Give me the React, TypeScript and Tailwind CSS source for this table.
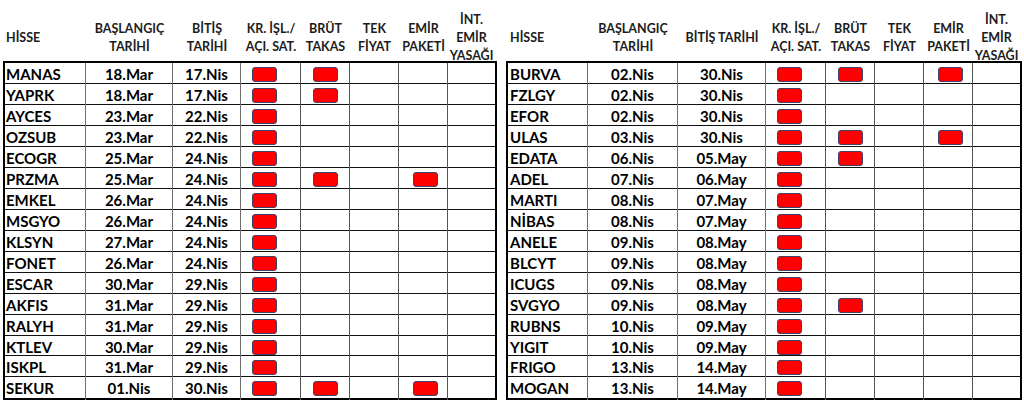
import React from 'react';

type Row = { code: string; start: string; end: string; flags: number[] };

const leftRows: Row[] = [
  { code: 'MANAS', start: '18.Mar', end: '17.Nis', flags: [0, 1] },
  { code: 'YAPRK', start: '18.Mar', end: '17.Nis', flags: [0, 1] },
  { code: 'AYCES', start: '23.Mar', end: '22.Nis', flags: [0] },
  { code: 'OZSUB', start: '23.Mar', end: '22.Nis', flags: [0] },
  { code: 'ECOGR', start: '25.Mar', end: '24.Nis', flags: [0] },
  { code: 'PRZMA', start: '25.Mar', end: '24.Nis', flags: [0, 1, 3] },
  { code: 'EMKEL', start: '26.Mar', end: '24.Nis', flags: [0] },
  { code: 'MSGYO', start: '26.Mar', end: '24.Nis', flags: [0] },
  { code: 'KLSYN', start: '27.Mar', end: '24.Nis', flags: [0] },
  { code: 'FONET', start: '26.Mar', end: '24.Nis', flags: [0] },
  { code: 'ESCAR', start: '30.Mar', end: '29.Nis', flags: [0] },
  { code: 'AKFIS', start: '31.Mar', end: '29.Nis', flags: [0] },
  { code: 'RALYH', start: '31.Mar', end: '29.Nis', flags: [0] },
  { code: 'KTLEV', start: '30.Mar', end: '29.Nis', flags: [0] },
  { code: 'ISKPL', start: '31.Mar', end: '29.Nis', flags: [0] },
  { code: 'SEKUR', start: '01.Nis', end: '30.Nis', flags: [0, 1, 3] },
];

const rightRows: Row[] = [
  { code: 'BURVA', start: '02.Nis', end: '30.Nis', flags: [0, 1, 3] },
  { code: 'FZLGY', start: '02.Nis', end: '30.Nis', flags: [0] },
  { code: 'EFOR', start: '02.Nis', end: '30.Nis', flags: [0] },
  { code: 'ULAS', start: '03.Nis', end: '30.Nis', flags: [0, 1, 3] },
  { code: 'EDATA', start: '06.Nis', end: '05.May', flags: [0, 1] },
  { code: 'ADEL', start: '07.Nis', end: '06.May', flags: [0] },
  { code: 'MARTI', start: '08.Nis', end: '07.May', flags: [0] },
  { code: 'NİBAS', start: '08.Nis', end: '07.May', flags: [0] },
  { code: 'ANELE', start: '09.Nis', end: '08.May', flags: [0] },
  { code: 'BLCYT', start: '09.Nis', end: '08.May', flags: [0] },
  { code: 'ICUGS', start: '09.Nis', end: '08.May', flags: [0] },
  { code: 'SVGYO', start: '09.Nis', end: '08.May', flags: [0, 1] },
  { code: 'RUBNS', start: '10.Nis', end: '09.May', flags: [0] },
  { code: 'YIGIT', start: '10.Nis', end: '09.May', flags: [0] },
  { code: 'FRIGO', start: '13.Nis', end: '14.May', flags: [0] },
  { code: 'MOGAN', start: '13.Nis', end: '14.May', flags: [0] },
];

// box alignment inside the 5 flag columns
const flagAlign = ['justify-start pl-[11px]', 'justify-center', 'justify-center', 'justify-center pl-[4px]', 'justify-center'];

function RedBox() {
  return <div className="h-[15px] w-[25px] rounded-[3px] border border-[#3d4266] bg-[#ff0000]" />;
}

function Head({ lines, left }: { lines: string[]; left?: boolean }) {
  return (
    <div className={`flex h-[61px] items-center pt-[14px] ${left ? 'justify-start' : 'justify-center'}`}>
      <div className={`text-[12.5px] leading-[18px] text-[#1c1c1c] ${left ? 'text-left' : 'text-center'}`}>
        {lines.map((l) => (
          <div key={l} className="whitespace-nowrap">{l}</div>
        ))}
      </div>
    </div>
  );
}

function Table({ rows, cols, wide, pad }: { rows: Row[]; cols: string; wide?: boolean; pad: string }) {
  return (
    <div>
      <div className={`grid px-[2px] ${cols}`}>
        <div className={pad}>
          <Head lines={['HİSSE']} left />
        </div>
        <Head lines={['BAŞLANGIÇ', 'TARİHİ']} />
        <Head lines={wide ? ['BİTİŞ TARİHİ'] : ['BİTİŞ', 'TARİHİ']} />
        <Head lines={['KR. İŞL./', 'AÇI. SAT.']} />
        <Head lines={['BRÜT', 'TAKAS']} />
        <Head lines={['TEK', 'FİYAT']} />
        <Head lines={['EMİR', 'PAKETİ']} />
        <Head lines={['İNT.', 'EMİR', 'YASAĞI']} />
      </div>
      <div className="border-2 border-black">
        {rows.map((r, i) => (
          <div
            key={r.code}
            className={`grid ${i === 13 ? 'h-[20px]' : 'h-[21px]'} ${cols} ${i < rows.length - 1 ? 'border-b border-[#111]' : ''}`}
          >
            <div className={`flex items-center border-r border-[#6f6f6f] text-[15px] text-black ${pad}`}>{r.code}</div>
            <div className="flex items-center justify-center border-r border-[#6f6f6f] text-[15px] text-black">{r.start}</div>
            <div className="flex items-center justify-center border-r border-[#6f6f6f] text-[15px] text-black">{r.end}</div>
            {[0, 1, 2, 3, 4].map((c) => (
              <div
                key={c}
                className={`flex items-center ${flagAlign[c]} ${c < 4 ? 'border-r border-[#555]' : ''}`}
              >
                {r.flags.includes(c) && <RedBox />}
              </div>
            ))}
          </div>
        ))}
      </div>
    </div>
  );
}

export default function App() {
  return (
    <div className="h-[403px] w-[1024px] overflow-hidden bg-white font-bold" style={{ fontFamily: 'Lato, "Open Sans", sans-serif' }}>
      <div className="flex gap-[9px] pl-[3px]">
        <div className="w-[494px]">
          <Table rows={leftRows} cols="grid-cols-[81px_87px_68px_60px_49px_49px_49px_47px]" pad="pl-[1px]" />
        </div>
        <div className="w-[516px]">
          <Table rows={rightRows} cols="grid-cols-[80px_90px_88px_60px_49px_49px_49px_47px]" pad="pl-[2px]" wide />
        </div>
      </div>
    </div>
  );
}
